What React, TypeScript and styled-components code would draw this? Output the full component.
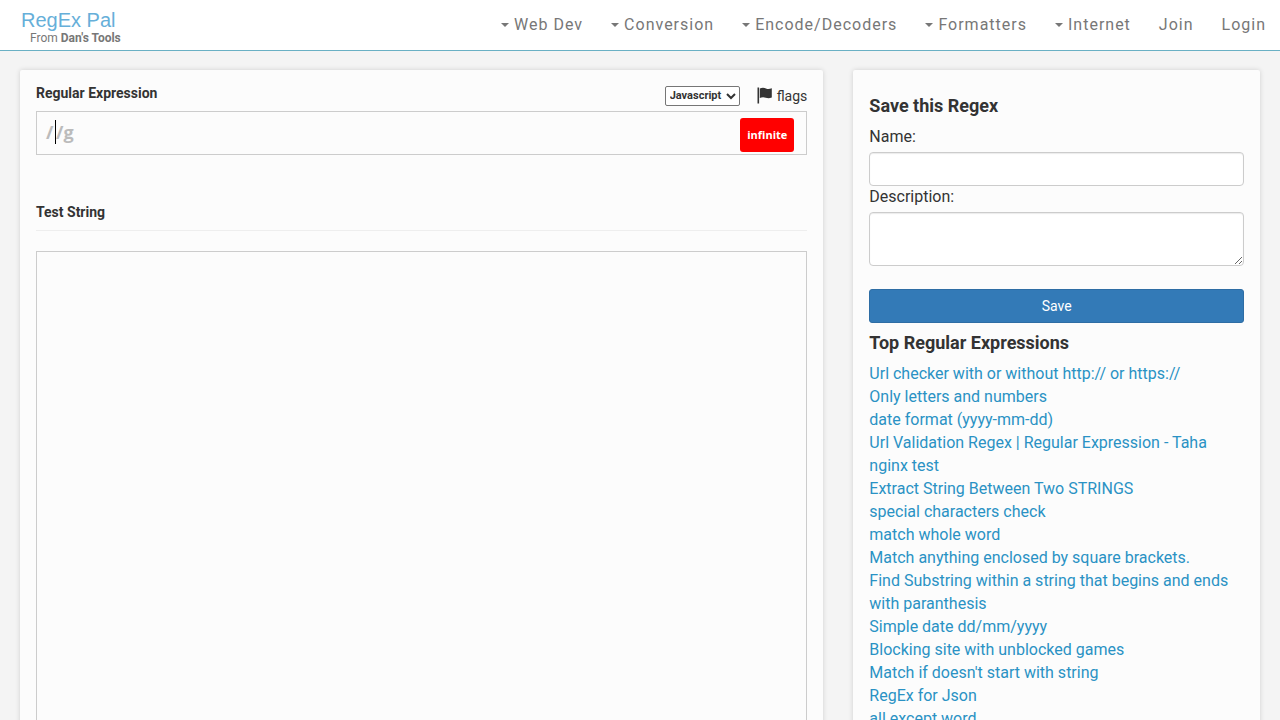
import React, { useState } from "react";
import styled, { createGlobalStyle } from "styled-components";

const GlobalStyle = createGlobalStyle`
  *, *::before, *::after { box-sizing: border-box; }
  html { height: 100%; }
  body {
    margin: 0;
    background: #f4f4f4;
    color: #333;
    font-family: Roboto, "Liberation Sans", sans-serif;
    font-size: 16px;
    line-height: 23px;
  }
`;

const Header = styled.header`
  display: flex;
  justify-content: space-between;
  height: 51px;
  background: #fff;
  border-bottom: 1px solid #6ab0c4;
`;

const Brand = styled.div`
  display: flex;
  flex-direction: column;
  padding: 10px 0 0 21px;
`;

const BrandName = styled.a`
  color: #66afd9;
  font-family: "Liberation Sans", sans-serif;
  font-size: 20px;
  line-height: 20px;
  text-decoration: none;
`;

const BrandFrom = styled.a`
  padding-left: 9px;
  color: #777;
  font-size: 12px;
  line-height: 16px;
  text-decoration: none;
`;

const Nav = styled.nav`
  display: flex;
  padding-bottom: 2px;
`;

const NavLink = styled.a`
  display: flex;
  align-items: center;
  gap: 5px;
  padding: 0 14px;
  color: #777;
  font-size: 16px;
  letter-spacing: 1px;
  text-decoration: none;
  white-space: nowrap;
`;

const Triangle = styled.span`
  margin-top: 2px;
  border-top: 4px solid #777;
  border-right: 4px solid transparent;
  border-left: 4px solid transparent;
`;

const Page = styled.main`
  display: grid;
  grid-template-columns: 2fr 1fr;
  padding-top: 19px;
`;

const MainColumn = styled.div`
  padding: 0 30px 20px 20px;
`;

const SideColumn = styled.div`
  padding: 0 20px 20px 0;
`;

const Card = styled.section`
  height: 100%;
  padding: 12px 16px 20px;
  background: #fcfcfc;
  border-radius: 2px;
  box-shadow: 0 0 5px rgba(0, 0, 0, 0.15);
`;

const ToolRow = styled.div`
  display: flex;
  justify-content: space-between;
  height: 29px;
  padding-bottom: 2px;
`;

const FieldLabel = styled.label`
  display: block;
  font-size: 14px;
  font-weight: 700;
  line-height: 23px;
`;

const Tools = styled.div`
  display: flex;
  align-items: center;
  gap: 17px;
`;

const FlavorSelect = styled.select`
  width: 75px;
  height: 20px;
  padding: 0;
  background: #fff;
  border: 1px solid #767676;
  border-radius: 2px;
  color: #333;
  font-family: Roboto, sans-serif;
  font-size: 11px;
  font-weight: 700;
`;

const FlagsButton = styled.button`
  display: flex;
  align-items: center;
  gap: 4px;
  padding: 0;
  background: none;
  border: 0;
  color: #333;
  font-family: Roboto, sans-serif;
  font-size: 14px;
  line-height: 20px;
`;

const RegexBox = styled.div`
  display: flex;
  align-items: center;
  height: 44px;
  padding: 0 12px 2px 9px;
  border: 1px solid #ccc;
  color: #bbb;
  font-family: "Open Sans", sans-serif;
  font-size: 18px;
  font-weight: 700;
`;

const Delimiter = styled.span`
  width: 9px;
`;

const Caret = styled.span`
  width: 1px;
  height: 24px;
  background: #000;
`;

const RegexInput = styled.input`
  flex: 1;
  min-width: 0;
  padding: 0;
  background: none;
  border: 0;
  outline: 0;
  color: inherit;
  font: inherit;
`;

const ResultBadge = styled.span`
  align-self: flex-end;
  padding: 5px 7px 6px;
  background: #f00;
  border-radius: 3px;
  color: #fff;
  font-size: 11px;
  line-height: 23px;
`;

const TestHeading = styled.div`
  margin: 46px 0 20px;
  padding-bottom: 6px;
  border-bottom: 1px solid #eee;
`;

const TestInput = styled.textarea`
  display: block;
  width: 100%;
  height: 500px;
  padding: 8px;
  background: transparent;
  border: 1px solid #ccc;
  outline: 0;
  resize: none;
  font-size: 16px;
`;

const SideTitle = styled.h2`
  margin: 0;
  padding: 10px 0;
  font-size: 18px;
  font-weight: 700;
  line-height: 20px;
`;

const SaveForm = styled.form`
  padding-top: 4px;
`;

const SideLabel = styled.label`
  display: block;
  padding-bottom: 4px;
  line-height: 22px;
`;

const NameInput = styled.input`
  display: block;
  width: 100%;
  height: 34px;
  padding: 6px 12px;
  background: #fff;
  border: 1px solid #ccc;
  border-radius: 4px;
  box-shadow: inset 0 1px 1px rgba(0, 0, 0, 0.08);
  font-size: 14px;
`;

const DescriptionInput = styled.textarea`
  display: block;
  width: 100%;
  height: 54px;
  padding: 6px 12px;
  background: #fff;
  border: 1px solid #ccc;
  border-radius: 4px;
  box-shadow: inset 0 1px 1px rgba(0, 0, 0, 0.08);
  font-size: 14px;
  resize: vertical;
`;

const SaveButton = styled.button`
  display: block;
  width: 100%;
  height: 34px;
  margin-top: 23px;
  background: #337ab7;
  border: 1px solid #2e6da4;
  border-radius: 3px;
  color: #fff;
  font-family: Roboto, sans-serif;
  font-size: 14px;
`;

const TopList = styled.ul`
  margin: -1px 0 0;
  padding: 0;
  list-style: none;
`;

const TopLink = styled.a`
  color: #2a92c4;
  text-decoration: none;
`;

const menus = [
  { name: "Web Dev", menu: true },
  { name: "Conversion", menu: true },
  { name: "Encode/Decoders", menu: true },
  { name: "Formatters", menu: true },
  { name: "Internet", menu: true },
  { name: "Join", menu: false },
  { name: "Login", menu: false },
];

const expressions = [
  "Url checker with or without http:// or https://",
  "Only letters and numbers",
  "date format (yyyy-mm-dd)",
  "Url Validation Regex | Regular Expression - Taha",
  "nginx test",
  "Extract String Between Two STRINGS",
  "special characters check",
  "match whole word",
  "Match anything enclosed by square brackets.",
  "Find Substring within a string that begins and ends with paranthesis",
  "Simple date dd/mm/yyyy",
  "Blocking site with unblocked games",
  "Match if doesn't start with string",
  "RegEx for Json",
  "all except word",
];

const FlagIcon = () => (
  <svg width="16" height="17" viewBox="0 0 16 17" fill="#333" aria-hidden="true">
    <path d="M0.500 0.500h1.600v16H0.500z" />
    <path d="M2.800 1.600C5 0.200 7.200 0.500 9 1.400c1.800 0.800 3.600 0.600 5.800-0.200v9.300c-2.300 0.900-4.200 0.900-6 0.200-2-0.800-4-0.800-6 0.300z" />
  </svg>
);

export default function App() {
  const [regex, setRegex] = useState("/g");
  return (
    <>
      <GlobalStyle />
      <Header>
        <Brand>
          <BrandName href="#">RegEx Pal</BrandName>
          <BrandFrom href="#">From <b>Dan's Tools</b></BrandFrom>
        </Brand>
        <Nav>
          {menus.map((item) => (
            <NavLink key={item.name} href="#">
              {item.menu && <Triangle />}
              {item.name}
            </NavLink>
          ))}
        </Nav>
      </Header>
      <Page>
        <MainColumn>
          <Card>
            <ToolRow>
              <FieldLabel htmlFor="regex">Regular Expression</FieldLabel>
              <Tools>
                <FlavorSelect aria-label="Flavor" defaultValue="Javascript">
                  <option>Javascript</option>
                  <option>PCRE</option>
                </FlavorSelect>
                <FlagsButton type="button"><FlagIcon />flags</FlagsButton>
              </Tools>
            </ToolRow>
            <RegexBox>
              <Delimiter>/</Delimiter>
              <Caret />
              <RegexInput id="regex" value={regex} onChange={(e) => setRegex(e.target.value)} />
              <ResultBadge>infinite</ResultBadge>
            </RegexBox>
            <TestHeading>
              <FieldLabel htmlFor="test">Test String</FieldLabel>
            </TestHeading>
            <TestInput id="test" />
          </Card>
        </MainColumn>
        <SideColumn>
          <Card>
            <SaveForm onSubmit={(e) => e.preventDefault()}>
              <SideTitle>Save this Regex</SideTitle>
              <SideLabel htmlFor="name">Name:</SideLabel>
              <NameInput id="name" />
              <SideLabel htmlFor="description">Description:</SideLabel>
              <DescriptionInput id="description" />
              <SaveButton type="submit">Save</SaveButton>
            </SaveForm>
            <SideTitle>Top Regular Expressions</SideTitle>
            <TopList>
              {expressions.map((title) => (
                <li key={title}><TopLink href="#">{title}</TopLink></li>
              ))}
            </TopList>
          </Card>
        </SideColumn>
      </Page>
    </>
  );
}
